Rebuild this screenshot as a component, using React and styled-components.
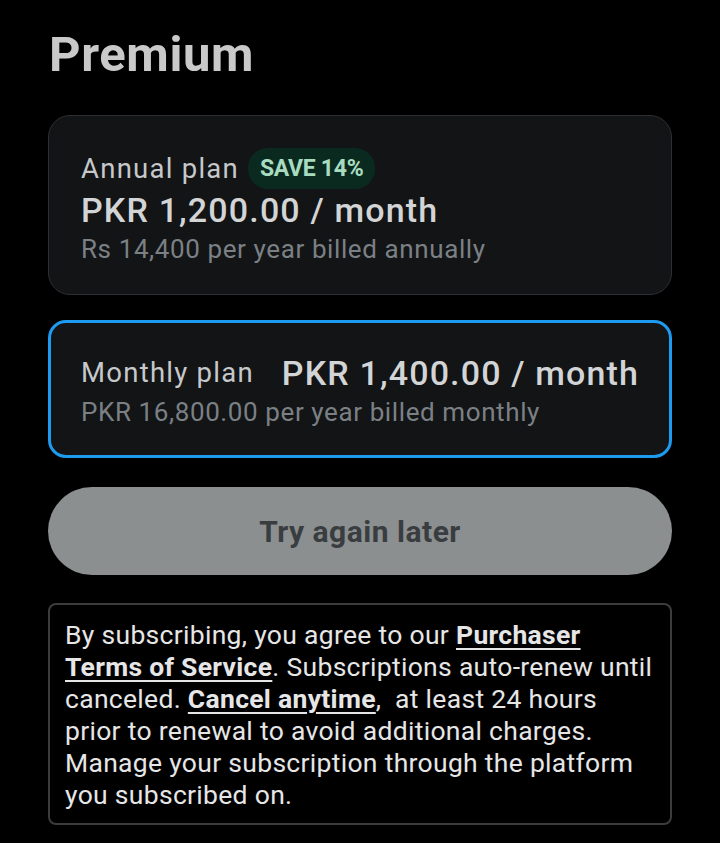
import styled, { createGlobalStyle } from 'styled-components'

const Global = createGlobalStyle`
  html, body { margin:0; padding:0; background:#000; }
  body { font-family: Roboto, "Noto Sans", sans-serif; }
`;

const App = () => {
  return <Page>
    <Global />
    <Title>Premium</Title>
    <Card>
      <Row>
        <PlanName>Annual plan</PlanName>
        <Badge>SAVE 14%</Badge>
      </Row>
      <Price>PKR 1,200.00 / month</Price>
      <Sub>Rs 14,400 per year billed annually</Sub>
    </Card>
    <Card selected>
      <Row gap="28px">
        <PlanName>Monthly plan</PlanName>
        <Price>PKR 1,400.00 / month</Price>
      </Row>
      <Sub>PKR 16,800.00 per year billed monthly</Sub>
    </Card>
    <Button disabled>Try again later</Button>
    <Notice>
      By subscribing, you agree to our <Link>Purchaser Terms of Service</Link>. Subscriptions auto-renew until canceled. <Link>Cancel anytime</Link>,&nbsp; at least 24 hours prior to renewal to avoid additional charges. Manage your subscription through the platform you subscribed on.
    </Notice>
  </Page>
}

const Page = styled.div`
  width:720px;
  min-height:843px;
  box-sizing:border-box;
  padding:24px 48px 0 48px;
  display:flex;
  flex-direction:column;
`;

const Title = styled.h1`
  margin:0 0 0 1px;
  font-size:49px;
  font-weight:700;
  color:#c9c9c9;
  line-height:62px;
  letter-spacing:0.6px;
`;

const Card = styled.div`
  margin-top:${p => p.selected ? '25px' : '29px'};
  background:#121416;
  border:${p => p.selected ? '3px solid #1d9bf0' : '1px solid #2c2f33'};
  border-radius:${p => p.selected ? '18px' : '22px'};
  padding:${p => p.selected ? '29px 16px 25px 30px' : '32px 16px 27px 32px'};
  display:flex;
  flex-direction:column;
`;

const Row = styled.div`
  display:flex;
  align-items:center;
  gap:${p => p.gap || '9px'};
  white-space:nowrap;
`;

const PlanName = styled.span`
  font-size:27.5px;
  color:#c6c8ca;
  line-height:40px;
  letter-spacing:1.25px;
  flex-shrink:0;
`;

const Badge = styled.span`
  background:#0a2a1f;
  color:#a8dcc0;
  font-size:23px;
  font-weight:700;
  padding:0 12px;
  border-radius:20px;
  line-height:41px;
  letter-spacing:-0.3px;
`;

const Price = styled.span`
  font-size:34px;
  font-weight:500;
  color:#d2d4d6;
  line-height:42px;
  letter-spacing:1.15px;
  white-space:nowrap;
`;

const Sub = styled.span`
  font-size:26px;
  color:#7b8085;
  line-height:36px;
  letter-spacing:0.6px;
`;

const Button = styled.button`
  margin-top:29px;
  height:88px;
  border:none;
  border-radius:44px;
  background:#8b8f90;
  color:#393d3f;
  font-family:inherit;
  font-size:30px;
  font-weight:700;
  letter-spacing:0.5px;
`;

const Notice = styled.p`
  margin:28px 0 0;
  border:2px solid #3c3c3e;
  border-radius:8px;
  padding:14px 15px 12px 15px;
  font-size:26.5px;
  line-height:32px;
  letter-spacing:0.3px;
  color:#e6e6e6;
`;

const Link = styled.a`
  font-weight:700;
  text-decoration:underline;
  text-underline-offset:4px;
  text-decoration-thickness:2px;
`;

export default App;
